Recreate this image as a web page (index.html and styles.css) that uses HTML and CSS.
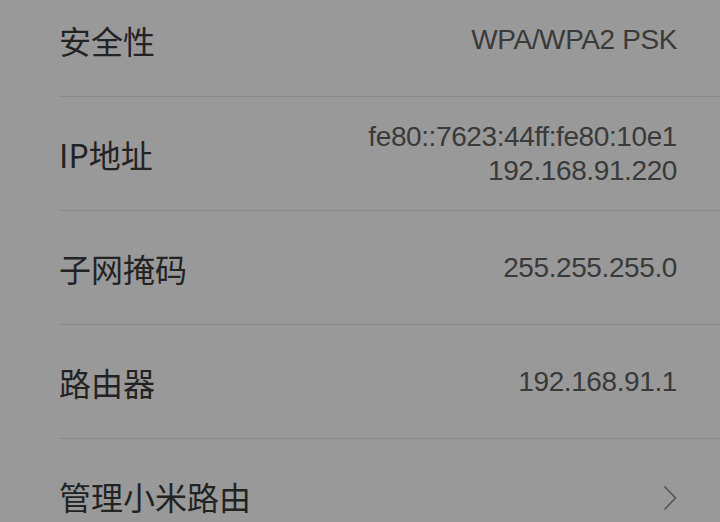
FILE: index.html
```html
<!DOCTYPE html>
<html lang="zh-CN">
<head>
    <meta charset="UTF-8">
    <meta name="viewport" content="width=device-width, initial-scale=1.0">
    <title>WLAN详情</title>
    <link rel="stylesheet" href="styles.css">
</head>
<body>
    <div class="info-list">
        <div class="info-row">
            <p class="label">安全性</p>
            <div class="value"><p>WPA/WPA2 PSK</p></div>
        </div>
        <div class="info-row">
            <p class="label">IP地址</p>
            <div class="value">
                <p>fe80::7623:44ff:fe80:10e1</p>
                <p>192.168.91.220</p>
            </div>
        </div>
        <div class="info-row">
            <p class="label">子网掩码</p>
            <div class="value"><p>255.255.255.0</p></div>
        </div>
        <div class="info-row">
            <p class="label">路由器</p>
            <div class="value"><p>192.168.91.1</p></div>
        </div>
        <div class="info-row last">
            <p class="label">管理小米路由</p>
            <div class="value">
                <svg class="arrow" width="14" height="26" viewBox="0 0 14 26">
                    <path d="M1.5 1.5 L12.5 13 L1.5 24.5" fill="none" stroke="#555" stroke-width="1.6"/>
                </svg>
            </div>
        </div>
    </div>
</body>
</html>
```

FILE: styles.css
```css
*{
    margin: 0;
    padding: 0;
    box-sizing: border-box;
}

body{
    background-color: #999999;
    overflow: hidden;
    height: 522px;
}

.info-list{
    margin-top: -17px;
    padding-left: 59px;
}

.info-row{
    height: 114px;
    display: flex;
    align-items: center;
    justify-content: space-between;
    padding-right: 43px;
    border-bottom: 1px solid #8b8b8b;
}

.info-row.last{
    border-bottom: none;
}

.label{
    font-family: "Noto Sans CJK SC", "Noto Sans", sans-serif;
    font-size: 32px;
    line-height: 40px;
    color: #232323;
}

.value{
    display: flex;
    flex-direction: column;
    align-items: flex-end;
    font-family: "Liberation Sans", Arial, sans-serif;
    font-size: 28px;
    line-height: 34px;
    color: #3a3a3a;
    letter-spacing: -0.4px;
}

.arrow{
    margin-top: 4px;
}
```
